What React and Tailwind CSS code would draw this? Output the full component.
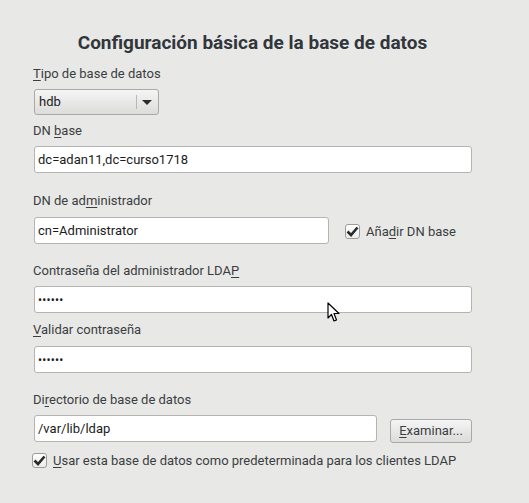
import React from 'react'

const font = { fontFamily: 'Roboto, "Noto Sans", "Liberation Sans", sans-serif' }

function U({ children }) {
  return <span className="underline underline-offset-2 decoration-1">{children}</span>
}

function Label({ children, className = '' }) {
  return <div className={`text-[13px] leading-4 text-[#3b3e40] ${className}`}>{children}</div>
}

function Field({ value, className = '' }) {
  return (
    <div className={`h-[27px] rounded-[3px] border border-[#b4b4b3] bg-white flex items-center pl-[3px] text-[13px] text-[#1b1b1b] ${className}`}>
      {value}
    </div>
  )
}

function Check({ children, className = '' }) {
  return (
    <div className={`flex items-center gap-[6px] text-[13px] text-[#3b3e40] ${className}`}>
      <div className="w-[15px] h-[15px] rounded-[3px] border border-[#9c9c9b] bg-gradient-to-b from-white to-[#ececec] flex items-center justify-center">
        <svg width="13" height="11" viewBox="0 0 13 11">
          <path d="M1.5 5.5 L5 9 L11.5 1.5" fill="none" stroke="#2a2a2a" strokeWidth="2.6" />
        </svg>
      </div>
      <span>{children}</span>
    </div>
  )
}

function Password() {
  return (
    <Field
      value={<span className="text-[12px] tracking-[0.2px] text-[#1b1b1b]">••••••</span>}
    />
  )
}

export default function App() {
  return (
    <div className="relative w-[529px] h-[503px] bg-[#e8e8e7] overflow-hidden" style={font}>
      <div className="w-[439px] ml-[33px] pt-[32px]">
        <h1 className="text-[19px] leading-[22px] font-bold text-[#31363b] text-center">
          Configuración básica de la base de datos
        </h1>

        <Label className="mt-[12px]"><U>T</U>ipo de base de datos</Label>
        <div className="mt-[7px] ml-[1px] w-[125px] h-[26px] rounded-[3px] border border-[#a9a9a8] bg-gradient-to-b from-[#f5f5f5] to-[#dcdcdb] flex items-center text-[13px] text-[#1b1b1b]">
          <span className="flex-1 pl-[4px]">hdb</span>
          <div className="w-px h-[14px] bg-[#b8b8b8]" />
          <svg width="21" height="8" viewBox="0 0 21 8">
            <path d="M5 2 L15 2 L10 7 Z" fill="#2d2d2d" />
          </svg>
        </div>

        <Label className="mt-[8px]">DN <U>b</U>ase</Label>
        <Field className="mt-[7px] ml-[1px]" value="dc=adan11,dc=curso1718" />

        <Label className="mt-[20px]">DN de ad<U>m</U>inistrador</Label>
        <div className="mt-[8px] ml-[1px] flex items-center">
          <Field className="w-[295px]" value="cn=Administrator" />
          <Check className="ml-[16px] mt-[2px]">Aña<U>d</U>ir DN base</Check>
        </div>

        <Label className="mt-[19px]">Contraseña del administrador LDA<U>P</U></Label>
        <div className="mt-[7px] ml-[1px]"><Password /></div>

        <Label className="mt-[9px]"><U>V</U>alidar contraseña</Label>
        <div className="mt-[8px] ml-[1px]"><Password /></div>

        <Label className="mt-[19px]">Di<U>r</U>ectorio de base de datos</Label>
        <div className="mt-[7px] ml-[1px] flex items-start">
          <Field className="w-[343px]" value="/var/lib/ldap" />
          <div className="ml-[13px] mt-[4px] w-[82px] h-[24px] rounded-[3px] border border-[#a9a9a8] bg-gradient-to-b from-[#f5f5f5] to-[#dcdcdb] flex items-center justify-center text-[13px] text-[#3b3e40]">
            <U>E</U>xaminar...
          </div>
        </div>

        <Check className="mt-[8px] -ml-[1px]"><U>U</U>sar esta base de datos como predeterminada para los clientes LDAP</Check>
      </div>

      <svg className="absolute left-[327px] top-[302px]" width="13" height="21" viewBox="0 0 13 21">
        <path d="M1 1 L1 16 L4.5 12.5 L7 19 L9.5 18 L7 11.5 L12 11.5 Z" fill="white" stroke="black" strokeWidth="1.2" strokeLinejoin="round" />
      </svg>
    </div>
  )
}
